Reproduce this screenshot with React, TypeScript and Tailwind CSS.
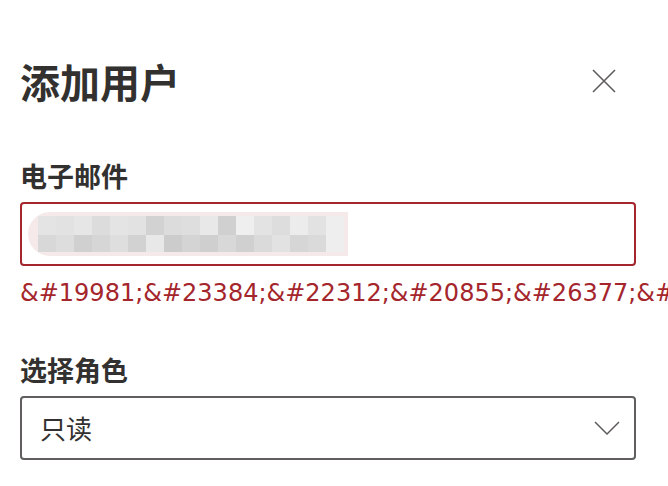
const cjk = "font-['Noto_Sans_CJK_SC','Noto_Sans',sans-serif]";

// pixelated (blurred) email value
const rowTop = [
  "bg-[#e4e4e4]", "bg-[#e2e2e2]", "bg-[#e6e6e6]", "bg-[#dcdcdc]", "bg-[#e4e4e4]", "bg-[#e2e2e2]",
  "bg-[#d2d2d2]", "bg-[#dcdcdc]", "bg-[#dedede]", "bg-[#e8e8e8]", "bg-[#d0d0d0]", "bg-[#efefef]",
  "bg-[#e3e3e3]", "bg-[#dddddd]", "bg-[#ececec]", "bg-[#e2e2e2]", "bg-[#eeeeee]",
];
const rowBottom = [
  "bg-[#d8d8d8]", "bg-[#dddddd]", "bg-[#d0d0d0]", "bg-[#d6d6d6]", "bg-[#dedede]", "bg-[#d2d2d2]",
  "bg-[#e8e8e8]", "bg-[#cccccc]", "bg-[#d4d4d4]", "bg-[#cfcfcf]", "bg-[#d8d8d8]", "bg-[#d0d0d0]",
  "bg-[#dadada]", "bg-[#e2e2e2]", "bg-[#d6d6d6]", "bg-[#dadada]", "bg-[#eeeeee]",
];

function CloseIcon() {
  return (
    <svg width="24" height="24" viewBox="0 0 24 24" fill="none" stroke="#605e5c" strokeWidth="1.6">
      <path d="M1 1 L23 23 M23 1 L1 23" />
    </svg>
  );
}

function Chevron() {
  return (
    <svg width="26" height="14" viewBox="0 0 26 14" fill="none" stroke="#605e5c" strokeWidth="1.5">
      <path d="M1 1 L13 13 L25 1" />
    </svg>
  );
}

export default function App() {
  return (
    <div className={`w-[668px] h-[486px] overflow-hidden bg-white pl-5 pr-8 ${cjk}`}>
      <header className="mt-[55px] flex h-[52px] items-center justify-between">
        <h1 className="text-[40px] font-semibold leading-[52px] text-[#323130]">添加用户</h1>
        <button className="mr-5 flex items-center justify-center">
          <CloseIcon />
        </button>
      </header>

      <label className="mt-[51px] block text-[27px] font-semibold leading-[36px] text-[#323130]">电子邮件</label>
      <div className="mt-2 flex h-[64px] items-center rounded-[4px] border-2 border-[#a4262c] pl-[6px]">
        <div className="flex h-[44px] items-center rounded-l-full rounded-r-[6px] bg-[#f6e9e9] pl-[10px] pr-[4px]">
          <div className="flex flex-col">
            <div className="flex">
              {rowTop.map((c, i) => (
                <span key={i} className={`h-[19px] w-[18px] ${c}`} />
              ))}
            </div>
            <div className="flex">
              {rowBottom.map((c, i) => (
                <span key={i} className={`h-[17px] w-[18px] ${c}`} />
              ))}
            </div>
          </div>
        </div>
      </div>
      <p className="mt-[11px] whitespace-nowrap font-['DejaVu_Sans',sans-serif] text-[24px] leading-[32px] text-[#a4262c]">
        &amp;#19981;&amp;#23384;&amp;#22312;&amp;#20855;&amp;#26377;&amp;#
      </p>

      <label className="mt-[43px] block text-[27px] font-semibold leading-[36px] text-[#323130]">选择角色</label>
      <div className="mt-2 flex h-[64px] items-center justify-between rounded-[4px] border-2 border-[#605e5c] pl-[18px] pr-[14px]">
        <span className="text-[26px] leading-[36px] text-[#323130]">只读</span>
        <Chevron />
      </div>
    </div>
  );
}
